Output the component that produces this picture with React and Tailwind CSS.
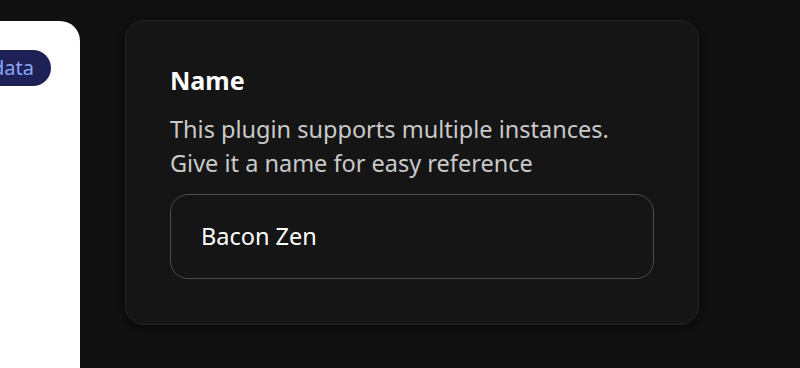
import React from "react";

const App = () => {
  return (
    <div
      className="flex h-[368px] w-[800px] overflow-hidden bg-[#101010]"
      style={{ fontFamily: '"Noto Sans", "Open Sans", sans-serif' }}
    >
      {/* left sidebar panel, scrolled partly out of view */}
      <div className="mt-[21px] h-[400px] w-[80px] shrink-0 overflow-hidden rounded-tr-[20px] bg-white">
        <div className="mt-[29px] flex justify-end pr-[29px]">
          <span className="shrink-0 whitespace-nowrap rounded-full bg-[#1d2156] pl-[18px] pr-[17px] text-[20px] leading-[36px] text-[#8da6f5]">
            Metadata
          </span>
        </div>
      </div>

      {/* name card */}
      <div className="ml-[45px] mt-[20px] h-[305px] w-[574px] shrink-0 rounded-[18px] border border-[#242424] bg-[#151515] px-[44px] pt-[42px] shadow-[0_2px_6px_rgba(0,0,0,0.6)]">
        <h2 className="text-[25px] font-bold leading-[34px] text-white">Name</h2>
        <p className="mt-[15px] text-[23.5px] leading-[34px] text-[#c9c9c9]">
          This plugin supports multiple instances.
          <br />
          Give it a name for easy reference
        </p>
        <div className="mt-[14px] flex h-[85px] items-center rounded-[18px] border border-[#4d4d4d] px-[30px]">
          <span className="text-[23.5px] text-white">Bacon Zen</span>
        </div>
      </div>
    </div>
  );
};

export default App;
